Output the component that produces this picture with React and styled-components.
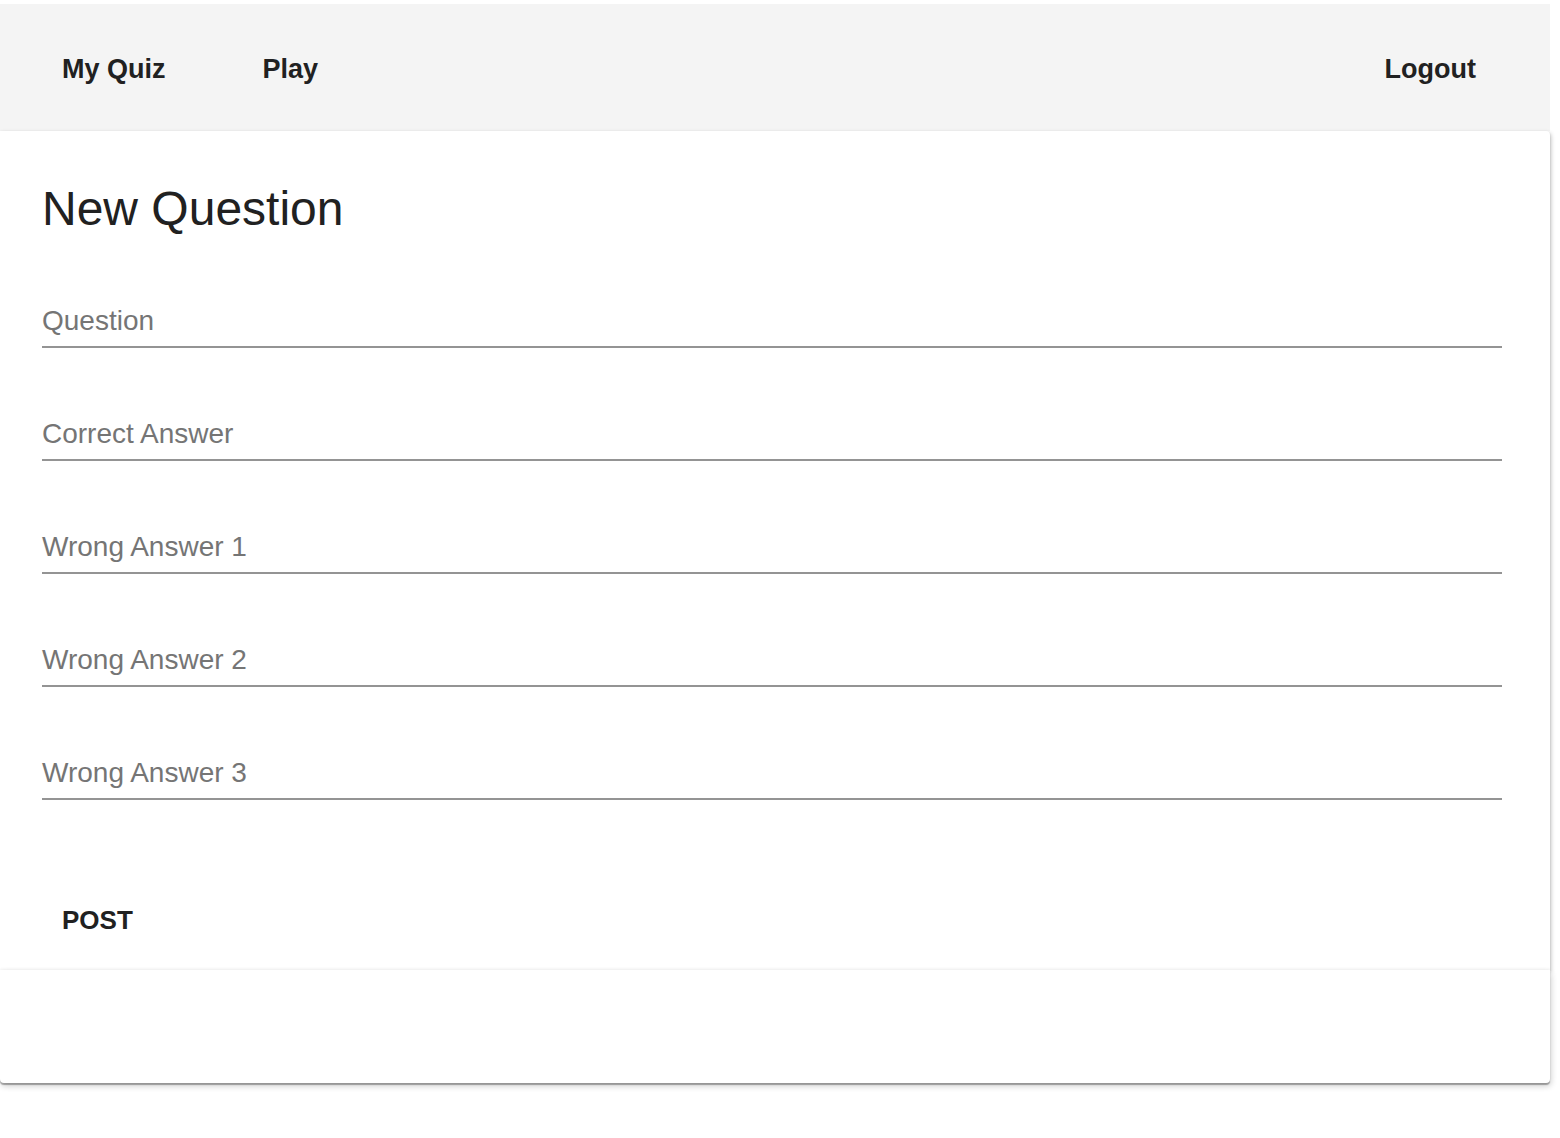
import styled, { createGlobalStyle } from "styled-components"

const GlobalStyle = createGlobalStyle`
    body {
        margin: 0;
        background: #ffffff;
        font-family: "Liberation Sans", Arial, sans-serif;
    }
`

const Page = styled.div`
    width: 1550px;
    padding-top: 4px;
    padding-bottom: 40px;
`

const NavBar = styled.nav`
    height: 127px;
    background: #f4f4f4;
    display: flex;
    align-items: center;
    padding: 3px 74px 0 62px;
    box-sizing: border-box;
`

const NavLink = styled.a`
    font-size: 27px;
    font-weight: 700;
    color: #212121;
    text-decoration: none;
    margin-right: ${(p) => (p.$last ? "0" : "97px")};
    margin-left: ${(p) => (p.$right ? "auto" : "0")};
    cursor: pointer;
`

const Card = styled.section`
    position: relative;
    z-index: 1;
    background: #ffffff;
    border-radius: 0 4px 0 0;
    box-shadow: 1px 2px 4px rgba(0, 0, 0, 0.25), 0 1px 2px rgba(0, 0, 0, 0.14);
    padding: 50px 48px 32px 42px;
    display: flex;
    flex-direction: column;
    align-items: stretch;
`

const Title = styled.h2`
    margin: 0 0 67px;
    font-size: 48px;
    line-height: 56px;
    font-weight: 400;
    color: #212121;
`

const Fields = styled.div`
    display: flex;
    flex-direction: column;
    gap: 69px;
`

const Field = styled.label`
    display: block;
    padding-bottom: 10px;
    border-bottom: 2px solid #949494;
`

const FieldLabel = styled.span`
    display: block;
    font-size: 28px;
    line-height: 32px;
    color: #757575;
    padding-top: 1px;
    margin-bottom: -1px;
`

const Actions = styled.div`
    margin-top: 102px;
    display: flex;
`

const PostButton = styled.button`
    background: transparent;
    border: none;
    padding: 0 20px;
    height: 36px;
    font-family: inherit;
    font-size: 26px;
    line-height: 36px;
    font-weight: 700;
    color: #212121;
    text-transform: uppercase;
    cursor: pointer;
`

const Footer = styled.div`
    position: relative;
    z-index: 2;
    height: 113px;
    background: #ffffff;
    border-radius: 0 0 4px 4px;
    box-shadow: 0 2px 1px rgba(0, 0, 0, 0.3), 1px 3px 6px rgba(0, 0, 0, 0.2), 0 -1px 3px rgba(0, 0, 0, 0.04);
`

const fields = ["Question", "Correct Answer", "Wrong Answer 1", "Wrong Answer 2", "Wrong Answer 3"]

export default function App() {
    return (
        <Page>
            <GlobalStyle />
            <NavBar>
                <NavLink>My Quiz</NavLink>
                <NavLink $last>Play</NavLink>
                <NavLink $right $last>Logout</NavLink>
            </NavBar>

            <Card>
                <Title>New Question</Title>
                <Fields>
                    {fields.map((f) => (
                        <Field key={f}>
                            <FieldLabel>{f}</FieldLabel>
                        </Field>
                    ))}
                </Fields>
                <Actions>
                    <PostButton>Post</PostButton>
                </Actions>
            </Card>
            <Footer />
        </Page>
    )
}
